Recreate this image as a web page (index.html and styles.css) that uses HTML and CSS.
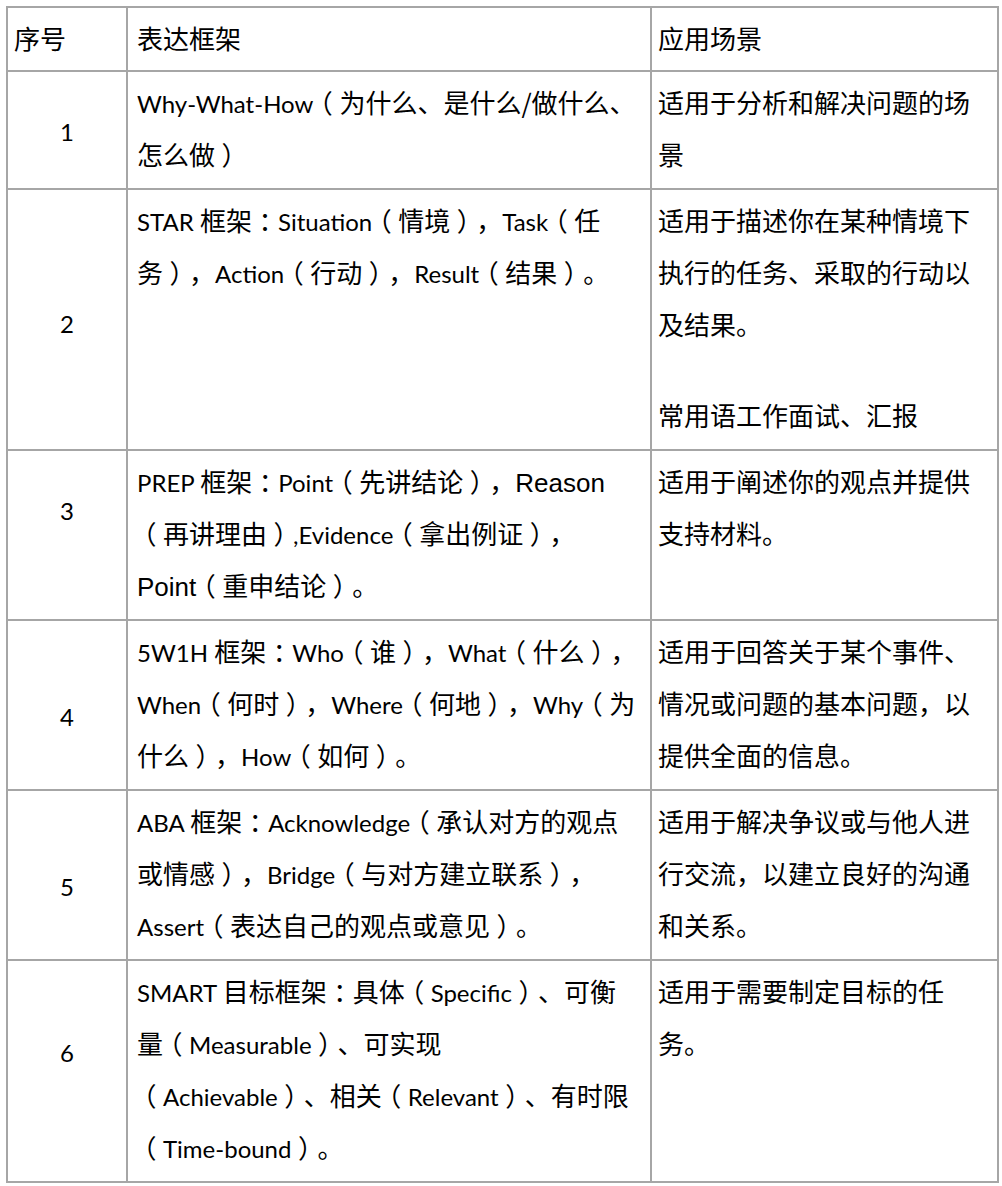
FILE: index.html
```html
<!DOCTYPE html>
<html lang="zh-CN">
<head>
<meta charset="utf-8">
<title>表达框架</title>
<link rel="stylesheet" href="styles.css">
</head>
<body>
<table class="grid">
  <colgroup>
    <col class="c-num">
    <col class="c-frame">
    <col class="c-use">
  </colgroup>
  <thead>
    <tr>
      <th class="num-head">序号</th>
      <th>表达框架</th>
      <th class="use">应用场景</th>
    </tr>
  </thead>
  <tbody>
    <tr>
      <td class="num mid-1"><span class="en">1</span></td>
      <td><span class="en">Why-What-How</span><span class="pa">（</span>为什么、是什么/做什么、<br>怎么做<span class="pa">）</span></td>
      <td class="use">适用于分析和解决问题的场<br>景</td>
    </tr>
    <tr>
      <td class="num mid-3"><span class="en">2</span></td>
      <td><span class="en">STAR </span>框架<span class="pa">：</span><span class="en">Situation</span><span class="pa">（</span>情境<span class="pa">）</span>，<span class="en">Task</span><span class="pa">（</span>任<br>务<span class="pa">）</span>，<span class="en">Action</span><span class="pa">（</span>行动<span class="pa">）</span>，<span class="en">Result</span><span class="pa">（</span>结果<span class="pa">）</span>。</td>
      <td class="use">
        <div>适用于描述你在某种情境下<br>执行的任务、采取的行动以<br>及结果。</div>
        <div class="blank"></div>
        <div>常用语工作面试、汇报</div>
      </td>
    </tr>
    <tr>
      <td class="num mid-1"><span class="en">3</span></td>
      <td><span class="en">PREP </span>框架<span class="pa">：</span><span class="en">Point</span><span class="pa">（</span>先讲结论<span class="pa">）</span>，<span class="hv">Reason</span><br><span class="pa">（</span>再讲理由<span class="pa">）</span><span class="en">,Evidence</span><span class="pa">（</span>拿出例证<span class="pa">）</span>，<br><span class="hv">Point</span><span class="pa">（</span>重申结论<span class="pa">）</span>。</td>
      <td class="use">适用于阐述你的观点并提供<br>支持材料。</td>
    </tr>
    <tr>
      <td class="num mid-2"><span class="en">4</span></td>
      <td><span class="en">5W1H </span>框架<span class="pa">：</span><span class="en">Who</span><span class="pa">（</span>谁<span class="pa">）</span>，<span class="en">What</span><span class="pa">（</span>什么<span class="pa">）</span>，<br><span class="en">When</span><span class="pa">（</span>何时<span class="pa">）</span>，<span class="en">Where</span><span class="pa">（</span>何地<span class="pa">）</span>，<span class="en">Why</span><span class="pa">（</span>为<br>什么<span class="pa">）</span>，<span class="en">How</span><span class="pa">（</span>如何<span class="pa">）</span>。</td>
      <td class="use">适用于回答关于某个事件、<br>情况或问题的基本问题，以<br>提供全面的信息。</td>
    </tr>
    <tr>
      <td class="num mid-2"><span class="en">5</span></td>
      <td><span class="en">ABA </span>框架<span class="pa">：</span><span class="en">Acknowledge</span><span class="pa">（</span>承认对方的观点<br>或情感<span class="pa">）</span>，<span class="en">Bridge</span><span class="pa">（</span>与对方建立联系<span class="pa">）</span>，<br><span class="en">Assert</span><span class="pa">（</span>表达自己的观点或意见<span class="pa">）</span>。</td>
      <td class="use">适用于解决争议或与他人进<br>行交流，以建立良好的沟通<br>和关系。</td>
    </tr>
    <tr>
      <td class="num mid-4"><span class="en">6</span></td>
      <td><span class="en">SMART </span>目标框架<span class="pa">：</span>具体<span class="pa">（</span><span class="en">Specific</span><span class="pa">）</span>、可衡<br>量<span class="pa">（</span><span class="en">Measurable</span><span class="pa">）</span>、可实现<br><span class="pa">（</span><span class="en">Achievable</span><span class="pa">）</span>、相关<span class="pa">（</span><span class="en">Relevant</span><span class="pa">）</span>、有时限<br><span class="pa">（</span><span class="en">Time-bound</span><span class="pa">）</span>。</td>
      <td class="use">适用于需要制定目标的任<br>务。</td>
    </tr>
  </tbody>
</table>
</body>
</html>
```

FILE: styles.css
```css
html, body {
  margin: 0;
  padding: 0;
  background: #ffffff;
}

body {
  padding: 6px 0 0 6px;
  font-family: "Noto Sans CJK SC", "Noto Sans CJK TC", sans-serif;
  font-size: 26px;
  color: #000000;
  text-spacing-trim: space-all;
}

.grid {
  border-collapse: collapse;
  table-layout: fixed;
  width: 991px;
}

.c-num { width: 120px; }
.c-frame { width: 524px; }
.c-use { width: 347px; }

.grid th,
.grid td {
  border: 2px solid #a6a6a6;
  padding: 4px 8px 8px 9px;
  line-height: 52px;
  font-weight: normal;
  text-align: left;
  vertical-align: top;
  white-space: nowrap;
}

.grid th {
  padding-top: 4px;
  padding-bottom: 6px;
}

.grid th.num-head {
  padding-left: 6px;
}

.grid .use {
  padding-left: 6px;
}

.grid td.num {
  text-align: center;
  padding-left: 0;
  padding-right: 0;
}

.grid td.mid-1 { padding-top: 32px; }
.grid td.mid-2 { padding-top: 68px; }
.grid td.mid-3 { padding-top: 106px; }
.grid td.mid-4 { padding-top: 64px; }

.en {
  font-family: Lato, "Liberation Sans", sans-serif;
  font-size: 24px;
  line-height: 1;
}

.hv {
  font-family: "Liberation Sans", Arial, sans-serif;
  font-size: 26px;
  line-height: 1;
}

/* full-width brackets and colon centred in their em box */
.pa {
  display: inline-block;
  width: 26px;
  text-align: center;
  font-feature-settings: "halt" 1;
}

.blank {
  height: 39px;
}
```
